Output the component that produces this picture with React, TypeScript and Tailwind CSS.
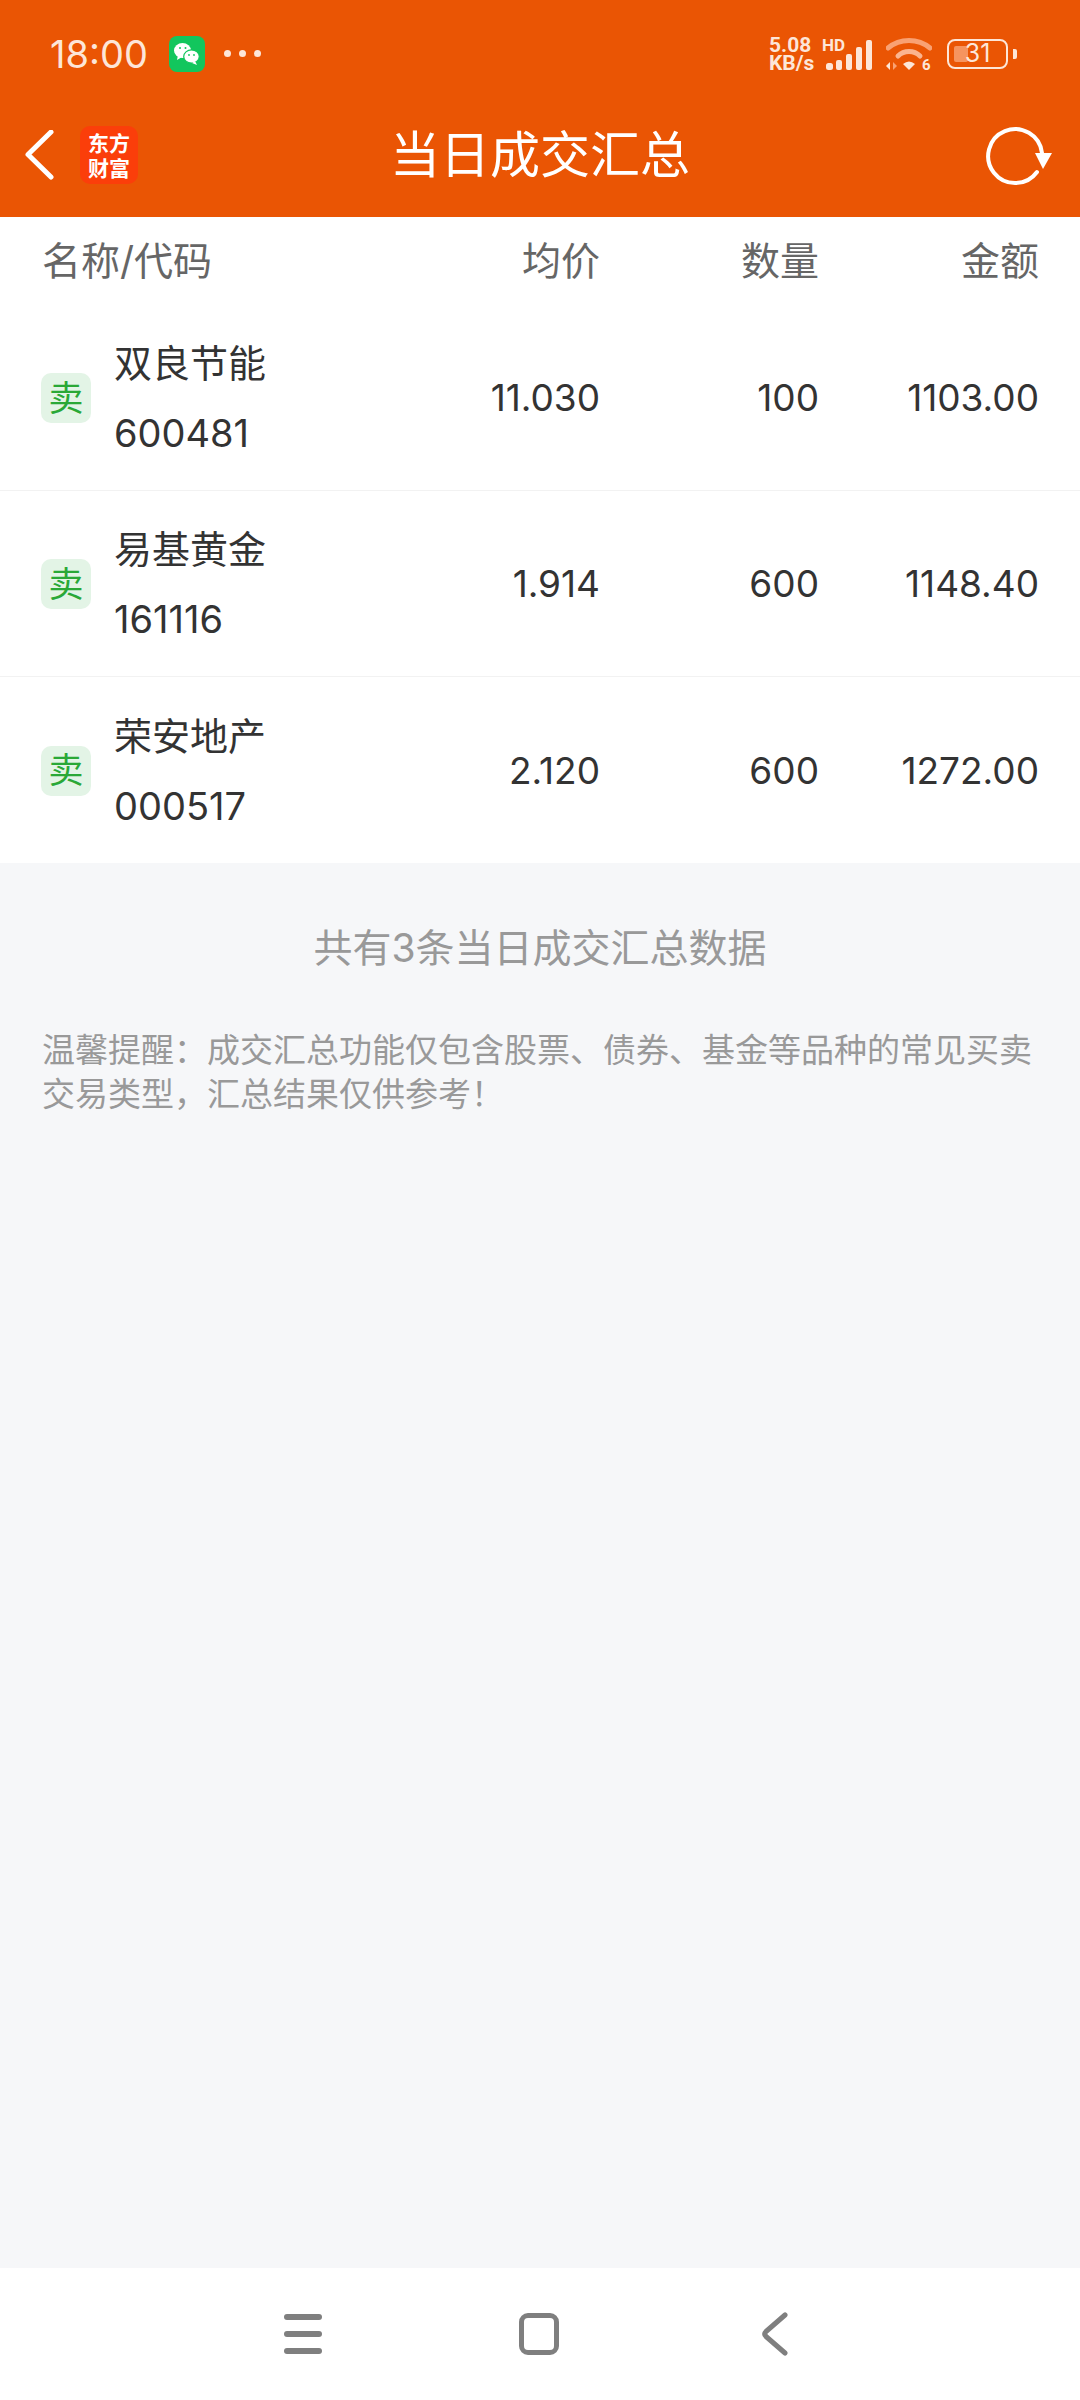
const ROWS = [
  { name: "双良节能", code: "600481", price: "11.030", qty: "100", amount: "1103.00" },
  { name: "易基黄金", code: "161116", price: "1.914", qty: "600", amount: "1148.40" },
  { name: "荣安地产", code: "000517", price: "2.120", qty: "600", amount: "1272.00" },
];

function WeChatIcon() {
  return (
    <div className="w-[36px] h-[36px] rounded-[8px] bg-[#12c65d] flex items-center justify-center">
      <svg width="28" height="26" viewBox="0 0 28 26">
        <ellipse cx="9.5" cy="9.5" rx="8.5" ry="7.5" fill="#fff" />
        <path d="M5 14l-1 5 5-3z" fill="#fff" />
        <ellipse cx="18.5" cy="15.5" rx="7.8" ry="6.6" fill="#fff" stroke="#12c65d" strokeWidth="1.2" />
        <path d="M22 20l2 4-5-2z" fill="#fff" />
        <circle cx="7" cy="7" r="1" fill="#12c65d" />
        <circle cx="12.5" cy="7" r="1" fill="#12c65d" />
        <circle cx="16" cy="14" r="0.9" fill="#12c65d" />
        <circle cx="21" cy="14" r="0.9" fill="#12c65d" />
      </svg>
    </div>
  );
}

function SignalIcon() {
  return (
    <svg width="46" height="30" viewBox="0 0 46 30" fill="#fde6d8">
      <rect x="0" y="23" width="7" height="7" rx="2.5" />
      <rect x="10" y="20" width="6" height="10" rx="2" />
      <rect x="20" y="14" width="6" height="16" rx="2" />
      <rect x="30" y="7" width="6" height="23" rx="2" />
      <rect x="40" y="0" width="6" height="30" rx="2" />
    </svg>
  );
}

function WifiIcon() {
  return (
    <svg width="46" height="34" viewBox="0 0 46 34" fill="none">
      <path d="M2 11C14 1 32 1 44 11" stroke="#f9a173" strokeWidth="5" strokeLinecap="round" />
      <path d="M12 19C18 13 28 13 34 19" stroke="#fbb48f" strokeWidth="5" strokeLinecap="round" />
      <path d="M17 27Q23 22 29 27L23 33z" fill="#fde6d8" />
      <path d="M4 25v8l-4-4z" fill="#fde6d8" />
      <path d="M7 25v8l4-4z" fill="#f9a173" />
      <text x="36" y="33" fontSize="15" fontWeight="700" fill="#fde6d8" fontFamily="Roboto, sans-serif">6</text>
    </svg>
  );
}

function BatteryIcon() {
  return (
    <div className="flex items-center gap-[5px]">
      <div className="relative w-[61px] h-[30px] rounded-[8px] border-[2px] border-[#fde6d8] flex items-center justify-center">
        <div className="absolute left-[5px] top-[5px] bottom-[5px] w-[14px] rounded-[2px] bg-[#f6945f]" />
        <span className="relative text-[25px] leading-none text-[#fde6d8]">31</span>
      </div>
      <div className="w-[4px] h-[10px] rounded-r-[2px] bg-[#fde6d8]" />
    </div>
  );
}

function StatusBar() {
  return (
    <div className="h-[107px] pl-[50px] pr-[63px] flex items-center justify-between">
      <div className="flex items-center gap-[21px]">
        <span className="text-[38px] leading-none text-[#fde6d8]">18:00</span>
        <WeChatIcon />
        <div className="flex gap-[8px] ml-[-2px]">
          <div className="w-[7px] h-[7px] rounded-full bg-[#fde6d8]" />
          <div className="w-[7px] h-[7px] rounded-full bg-[#fde6d8]" />
          <div className="w-[7px] h-[7px] rounded-full bg-[#fde6d8]" />
        </div>
      </div>
      <div className="flex items-center">
        <div className="w-[53px] text-[21px] leading-[18px] font-bold text-[#fde6d8] font-['Roboto',sans-serif]">
          <div>5.08</div>
          <div>KB/s</div>
        </div>
        <div className="relative w-[50px] h-[32px] flex justify-end items-end">
          <span className="absolute left-0 -top-[1px] text-[17px] leading-none font-bold text-[#fde6d8] font-['Roboto',sans-serif]">
            HD
          </span>
          <SignalIcon />
        </div>
        <div className="ml-[14px] mr-[15px]">
          <WifiIcon />
        </div>
        <BatteryIcon />
      </div>
    </div>
  );
}

function Header() {
  return (
    <div className="h-[110px] pb-[14px] relative flex items-center justify-center">
      <div className="absolute left-[25px] top-[19px] flex items-center gap-[25px]">
        <svg width="30" height="50" viewBox="0 0 30 50" fill="none">
          <path d="M26 2L3 24.5L26 47" stroke="#fff" strokeWidth="5" strokeLinecap="round" strokeLinejoin="round" />
        </svg>
        <div className="w-[58px] h-[58px] rounded-[10px] bg-[#fb3e0a] flex flex-col items-center justify-center text-white text-[21px] leading-[25px] font-bold font-['Noto_Sans_CJK_SC']">
          <div>东方</div>
          <div>财富</div>
        </div>
      </div>
      <span className="text-[50px] leading-none text-white">当日成交汇总</span>
      <svg className="absolute right-[26px] top-[18px]" width="68" height="62" viewBox="0 0 68 62" fill="none">
        <path d="M51 47A27 27 0 1 1 56 28" stroke="#fff" strokeWidth="4" strokeLinecap="round" />
        <path d="M49 28H66L57 44z" fill="#fff" />
      </svg>
    </div>
  );
}

function TableRow({ row, last }: { row: (typeof ROWS)[number]; last: boolean }) {
  return (
    <div
      className={`h-[186px] pl-[41px] pr-[41px] pt-[1px] flex items-center text-[37px] text-[#333333] ${
        last ? "" : "border-b border-[#f2f2f2]"
      }`}
    >
      <div className="w-[50px] h-[50px] rounded-[10px] bg-[#e3f4e6] flex items-center justify-center text-[35px] leading-none text-[#2aa837]">
        卖
      </div>
      <div className="ml-[23px] flex-1">
        <div className="leading-[70px] text-[38px]">{row.name}</div>
        <div className="leading-[70px] text-[38px]">{row.code}</div>
      </div>
      <div className="w-[220px] text-right">{row.price}</div>
      <div className="w-[219px] text-right">{row.qty}</div>
      <div className="w-[220px] text-right">{row.amount}</div>
    </div>
  );
}

export default function App() {
  return (
    <div className="w-[1080px] h-[2400px] flex flex-col bg-[#f6f7f9] font-['Inter','Noto_Sans_CJK_SC',sans-serif] overflow-hidden">
      <div className="bg-[#ea5504]">
        <StatusBar />
        <Header />
      </div>

      <div className="bg-white">
        <div className="h-[88px] pl-[42px] pr-[41px] pt-[1px] flex items-center text-[39px] text-[#666666]">
          <div className="flex-1">名称/代码</div>
          <div className="w-[220px] text-right">均价</div>
          <div className="w-[219px] text-right">数量</div>
          <div className="w-[220px] text-right">金额</div>
        </div>
        {ROWS.map((row, i) => (
          <TableRow key={row.code} row={row} last={i === ROWS.length - 1} />
        ))}
      </div>

      <div className="flex-1 px-[42px]">
        <div className="mt-[57px] text-center text-[39px] leading-[56px] text-[#999999]">
          共有3条当日成交汇总数据
        </div>
        <div className="mt-[52px] text-[33px] leading-[44px] text-[#999999]">
          温馨提醒：成交汇总功能仅包含股票、债券、基金等品种的常见买卖交易类型，汇总结果仅供参考！
        </div>
      </div>

      <div className="h-[132px] bg-white pl-[284px] flex items-center">
        <div className="w-[38px] flex flex-col gap-[11px]">
          <div className="h-[6px] rounded-full bg-[#7f7f7f]" />
          <div className="h-[6px] rounded-full bg-[#7f7f7f]" />
          <div className="h-[6px] rounded-full bg-[#7f7f7f]" />
        </div>
        <div className="ml-[197px] w-[40px] h-[42px] rounded-[9px] border-[5px] border-[#7f7f7f]" />
        <svg className="ml-[202px]" width="28" height="44" viewBox="0 0 28 44" fill="none">
          <path d="M24 3L5 19.5Q2.5 22 5 24.5L24 41" stroke="#7f7f7f" strokeWidth="5" strokeLinecap="round" strokeLinejoin="round" />
        </svg>
      </div>
    </div>
  );
}
